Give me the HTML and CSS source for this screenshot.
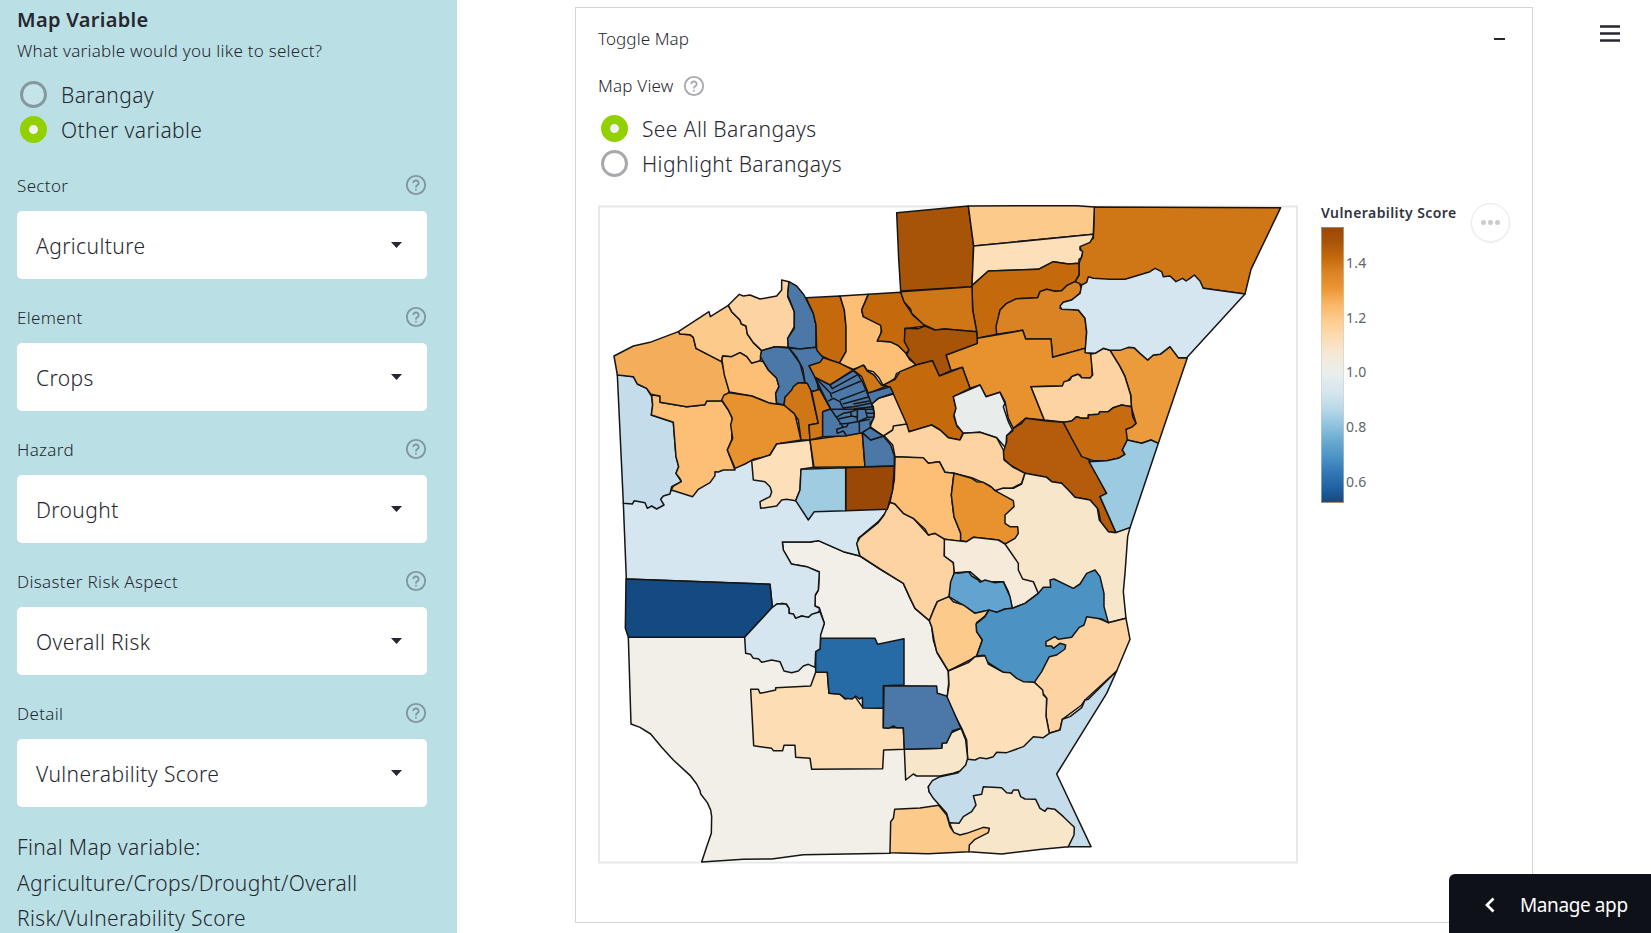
FILE: index.html
```html
<!DOCTYPE html>
<html lang="en">
<head>
<meta charset="utf-8">
<title>Map</title>
<link rel="stylesheet" href="styles.css">
</head>
<body>
<svg class="defs" width="0" height="0">
  <symbol id="help" viewBox="0 0 24 24"><circle cx="12" cy="12" r="10"/><path d="M9.1 9a3 3 0 0 1 5.8 1c0 2-2.9 2.4-2.9 4M12 17.2v.1"/></symbol>
</svg>
<div class="app">
  <aside class="sidebar">
    <h3 class="title">Map Variable</h3>
    <p class="question">What variable would you like to select?</p>
    <div class="radios">
      <label class="radio"><i class="dot"></i><span>Barangay</span></label>
      <label class="radio"><i class="dot on"></i><span>Other variable</span></label>
    </div>
    <div class="field"><div class="label"><span>Sector</span><svg class="help"><use href="#help"/></svg></div><div class="select"><span>Agriculture</span><i class="caret"></i></div></div>
    <div class="field"><div class="label"><span>Element</span><svg class="help"><use href="#help"/></svg></div><div class="select"><span>Crops</span><i class="caret"></i></div></div>
    <div class="field"><div class="label"><span>Hazard</span><svg class="help"><use href="#help"/></svg></div><div class="select"><span>Drought</span><i class="caret"></i></div></div>
    <div class="field"><div class="label"><span>Disaster Risk Aspect</span><svg class="help"><use href="#help"/></svg></div><div class="select"><span>Overall Risk</span><i class="caret"></i></div></div>
    <div class="field"><div class="label"><span>Detail</span><svg class="help"><use href="#help"/></svg></div><div class="select"><span>Vulnerability Score</span><i class="caret"></i></div></div>
    <p class="final">Final Map variable:<br>Agriculture/Crops/Drought/Overall<br>Risk/Vulnerability Score</p>
  </aside>
  <main class="main">
    <section class="card">
      <header class="card-head"><span>Toggle Map</span><i class="minus"></i></header>
      <div class="view-label"><span>Map View</span><svg class="help"><use href="#help"/></svg></div>
      <div class="radios view">
        <label class="radio"><i class="dot on"></i><span>See All Barangays</span></label>
        <label class="radio"><i class="dot"></i><span>Highlight Barangays</span></label>
      </div>
      <div class="chart">
        <svg class="map" viewBox="598 205 700 659" width="700" height="659">
          <rect class="frame" x="599" y="206.500" width="698" height="656"/>
          <!-- south-west -->
          <g transform="translate(600 500) scale(.33333)">
            <path fill="#f2efe8" d="M85 412L93 672L120 682L152 702L185 742L220 780L270 826L290 852L300 872L302 882L322 908L332 930L335 950L334 1000L320 1040L305 1086L430 1078L515 1077L610 1064L870 1060L900 1000L1040 930L987 875L985 860L1020 830L1060 700L1042 588L1046 550L1045 513L1012 460L1000 420L995 380L988 362L945 325L928 290L910 250L840 207L780 168L730 155L655 122L630 126L547 126L550 150L574 192L620 200L658 216L655 270L646 285L645 318L658 324L673 370L662 400L434 412Z"/>
          </g>
          <!-- north-west -->
          <g transform="translate(600 260) scale(.33333)">
            <path fill="#d5e6f0" d="M70 730L79 957L510 973L517 1042L545 1030L560 1033L567 1045L567 1060L580 1062L587 1075L605 1068L625 1073L658 1055L658 1044L645 1038L646 1005L655 990L658 936L620 920L574 912L550 870L547 846L630 846L655 842L730 875L780 888L772 855L775 835L835 785L865 748L600 700L460 590L345 600L220 690Z"/>
            <path fill="#c5ddea" d="M52 345L70 346L100 350L112 372L125 378L140 385L155 410L158 435L154 465L220 487L228 590L236 620L228 640L244 665L215 680L210 702L190 708L182 718L192 735L170 747L155 738L142 745L135 728L103 722L97 732L70 730Z"/>
            <path fill="#fcbf75" d="M155 405L180 408L180 427L260 440L315 434L320 423L365 422L385 450L397 475L395 540L382 570L405 630L370 630L355 636L345 635L345 647L330 668L295 688L278 710L214 690L220 678L244 665L240 656L228 640L236 620L228 590L220 487L154 465L158 435Z"/>
            <path fill="#f4ae5b" d="M42 288L100 258L150 247L235 215L240 222L270 224L280 232L288 265L365 305L388 395L365 422L320 423L315 434L260 440L180 427L180 408L153 403L140 385L112 372L100 350L52 345Z"/>
            <path fill="#fccb8c" d="M235 215L327 155L331 170L385 136L395 155L420 180L424 192L438 198L442 222L460 248L485 272L480 305L455 310L440 290L420 278L395 290L368 288L365 305L288 265L280 232L270 224L240 222Z"/>
            <path fill="#fcd3a1" d="M385 136L418 103L430 108L450 105L480 117L530 108L545 90L545 60L567 65L563 110L583 155L583 200L563 235L565 262L525 260L485 272L460 248L442 222L438 198L424 192L420 180L395 155Z"/>
            <path fill="#fcbf75" d="M368 288L395 290L420 278L440 290L455 310L480 302L490 305L505 330L530 355L537 380L527 400L530 432L510 430L455 408L388 396L373 345L366 300Z"/>
            <path fill="#e8922f" d="M365 420L372 405L388 398L455 408L510 430L552 435L585 462L603 540L530 552L510 585L490 592L460 598L435 612L405 625L382 570L398 535L392 495L397 475L385 450Z"/>
            <path fill="#4c78a8" d="M485 272L525 260L567 264L600 310L615 367L595 370L580 385L575 396L555 412L552 435L530 430L527 400L537 380L530 355L505 330L490 305L481 290Z"/>
            <path fill="#4c78a8" d="M567 65L590 78L612 105L640 160L648 195L648 262L600 267L565 262L563 235L583 205L583 155L563 105Z"/>
            <path fill="#4c78a8" d="M567 264L600 267L648 262L655 275L670 292L660 312L628 320L650 355L655 390L635 395L615 367L608 325L590 292Z"/>
            <path fill="#c56a0c" d="M618 113L720 108L733 150L738 200L738 275L718 310L690 300L665 288L650 270L648 195L640 160Z"/>
            <path fill="#fcbf75" d="M720 108L805 103L785 150L790 170L845 195L843 220L832 243L870 245L895 257L915 275L930 300L948 313L930 325L890 340L885 355L850 378L838 355L820 335L800 330L793 317L760 328L718 310L738 275L738 200L733 150Z"/>
            <path fill="#c56a0c" d="M805 103L902 97L915 130L932 155L940 167L975 195L970 199L915 206L915 230L927 270L918 280L895 257L870 245L832 243L845 215L842 196L790 170L785 150Z"/>
            <path fill="#fddfba" d="M455 602L510 585L530 552L630 540L640 622L603 628L600 690L587 722L560 718L545 720L530 738L482 745L480 725L510 710L515 695L510 680L495 665L460 660Z"/>
          </g>
          <!-- north-east -->
          <g transform="translate(880 195) scale(.33333)">
            <path fill="#cf7616" d="M643 36L1202 38L1113 223L1095 297L970 280L800 330L605 270L585 260L597 240L597 205L607 180L600 155L640 130Z"/>
            <path fill="#a85408" d="M50 53L265 33L281 153L276 275L62 288L56 190Z"/>
            <path fill="#fccb8c" d="M265 33L590 32L643 36L640 118L281 153Z"/>
            <path fill="#fddfba" d="M281 153L640 118L638 128L630 142L600 155L600 164L608 170L604 188L597 193L597 205L565 207L520 200L475 223L325 228L276 272Z"/>
            <path fill="#c56a0c" d="M276 272L325 228L475 223L520 200L565 207L597 205L597 240L585 260L560 272L545 287L525 289L500 283L480 290L473 308L410 311L380 325L360 345L350 418L292 430L290 410L278 345Z"/>
            <path fill="#d98324" d="M585 260L598 265L605 280L600 295L575 315L550 322L540 340L595 345L615 370L620 410L618 460L518 487L513 432L437 432L428 406L350 418L348 395L360 345L380 325L410 311L473 308L480 290L500 283L525 289L545 287L560 272Z"/>
            <path fill="#eb9b3c" d="M690 466L745 457L762 458L803 495L820 480L840 478L870 455L895 488L922 488L835 745L813 735L785 745L740 735L735 705L768 685L755 640L752 600L735 545L720 515Z"/>
            <path fill="#e8922f" d="M198 480L292 445L292 430L428 406L437 432L513 432L518 487L615 460L620 472L635 478L637 548L605 548L600 540L590 538L575 545L547 573L453 575L493 675L437 670L400 700L385 670L375 620L360 592L318 605L300 570L270 580L247 517L213 527Z"/>
            <path fill="#fcd3a1" d="M632 478L645 475L670 460L690 466L720 515L735 545L752 600L754 635L725 630L700 638L685 650L660 650L655 658L625 660L625 670L605 670L590 665L575 678L555 682L493 675L453 575L547 573L552 560L570 555L575 545L595 538L605 548L630 549L638 540Z"/>
            <path fill="#d5e6f0" d="M605 270L620 262L625 245L640 250L690 253L735 253L810 230L825 220L845 230L850 245L870 243L888 260L908 250L918 258L930 250L943 240L960 258L970 280L1095 297L920 488L895 488L870 455L840 478L820 480L803 495L780 475L762 458L745 457L720 466L690 466L670 460L645 475L615 473L620 410L615 370L595 345L545 343L540 333L550 322L575 315L600 295Z"/>
            <path fill="#cf7616" d="M62 290L276 275L278 345L290 410L195 402L165 405L130 388L95 355L92 343L72 320Z"/>
            <path fill="#a85408" d="M75 400L115 401L135 393L165 405L195 402L290 410L292 445L198 480L213 527L178 543L157 497L108 510L80 480L87 465L73 440Z"/>
            <path fill="#c56a0c" d="M10 570L45 553L60 530L108 510L157 497L178 543L247 517L270 580L220 605L228 640L222 665L232 695L250 710L240 735L205 728L180 705L155 690L87 710L40 600L30 578Z"/>
            <path fill="#e8ecea" d="M220 605L300 570L318 605L360 592L375 625L370 635L385 680L397 705L380 722L378 760L350 728L300 712L250 715L230 690L222 660L228 640Z"/>
            <path fill="#b55c0c" d="M400 700L425 685L437 670L500 678L550 682L605 780L630 797L680 895L660 905L708 1013L685 1010L662 980L655 945L630 915L585 907L545 865L515 860L500 847L435 835L390 810L370 790L370 770L380 740L380 722L398 708Z"/>
            <path fill="#c66b10" d="M550 682L575 678L590 665L605 670L625 670L625 660L655 658L660 650L685 650L700 638L725 630L754 635L758 665L768 685L755 697L738 703L742 735L727 765L735 778L715 790L680 797L640 797L605 785L575 730Z"/>
            <path fill="#9ccae1" d="M627 800L680 797L715 790L735 778L727 765L742 735L785 745L813 735L835 745L750 998L708 1013L660 905L680 895Z"/>
            <path fill="#fcd3a1" d="M80 687L87 710L155 690L180 705L205 728L240 735L250 715L300 712L350 728L370 765L372 795L400 817L435 835L425 865L395 880L345 887L330 873L315 865L280 850L222 835L195 832L178 800L145 805L130 790L45 785L38 750L10 720L38 700L40 690Z"/>
          </g>
          <!-- east and centre -->
          <g transform="translate(880 400) scale(.33333)">
            <path fill="#f8e6cb" d="M435 220L500 232L515 245L545 250L570 275L585 292L630 300L652 325L658 360L685 395L708 398L750 383L743 410L735 520L730 575L738 655L685 668L475 640L370 430L345 272L370 264L400 265L425 252Z"/>
            <path fill="#fcd3a1" d="M30 307L45 312L70 340L100 355L145 405L165 400L195 418L193 468L220 488L223 515L207 590L172 605L160 632L148 662L105 625L88 590L70 550L0 507L-60 468L-70 430L-60 412L-5 368L12 345Z"/>
            <path fill="#fcbf75" d="M45 170L130 173L145 190L178 185L195 217L222 220L214 285L222 350L242 400L242 425L195 418L165 400L145 405L135 387L118 372L100 355L70 340L45 312L30 307L43 240Z"/>
            <path fill="#e8922f" d="M222 220L275 235L290 245L310 247L335 262L345 272L400 302L402 320L375 345L375 370L390 380L413 380L415 400L405 415L375 432L355 420L280 412L260 425L242 422L242 400L222 350L214 285Z"/>
            <path fill="#f6ebda" d="M193 418L260 425L280 412L355 420L375 432L415 490L415 510L428 537L460 545L475 580L435 610L397 625L385 575L370 545L305 545L270 515L223 518L220 488L193 468Z"/>
            <path fill="#62a4cf" d="M223 518L235 520L265 515L275 528L295 540L300 547L315 540L345 548L370 545L390 590L397 625L375 627L350 637L320 632L285 640L260 622L240 610L207 590L212 545Z"/>
            <path fill="#fccb8c" d="M172 605L207 590L220 605L250 615L285 640L327 630L315 648L290 668L290 695L307 720L290 768L270 780L205 813L170 755L162 720L155 680L148 662L160 632Z"/>
            <path fill="#fcd3a1" d="M738 655L750 718L710 813L615 900L605 915L547 958L540 990L508 1000L498 950L500 895L463 847L440 700L620 640L685 668Z"/>
            <path fill="#4c93c3" d="M327 630L350 637L375 627L397 625L435 610L475 580L490 562L512 562L510 540L522 537L580 565L600 552L620 520L645 510L660 530L672 580L672 620L685 668L665 657L620 650L612 675L598 682L575 712L535 718L525 710L498 725L498 738L515 738L520 745L540 730L557 735L555 747L530 765L508 770L485 815L463 847L430 848L410 838L370 817L335 795L320 785L313 766L290 768L307 720L290 695L288 672L315 650Z"/>
          </g>
          <!-- south-east -->
          <g transform="translate(850 640) scale(.33333)">
            <path fill="#c5ddea" d="M800 93L770 160L620 402L723 620L655 620L500 600L298 548L290 520L250 475L237 455L235 440L247 422L270 410L325 398L350 360L410 300L598 280L630 270L637 238L660 230L695 203L705 180L715 178Z"/>
            <path fill="#fddfba" d="M295 93L355 68L375 50L405 47L415 72L460 97L480 98L500 115L520 125L553 127L578 150L580 165L590 175L588 228L598 280L580 293L550 290L520 320L470 338L440 337L430 350L410 356L390 353L375 360L353 358L350 300L335 265L290 180L297 135Z"/>
            <path fill="#f8e6cb" d="M298 548L327 550L340 530L365 515L378 495L370 467L395 463L400 440L455 443L470 458L485 460L490 450L505 450L512 470L525 477L557 478L570 505L585 514L592 505L615 508L640 530L673 562L672 585L655 620L575 628L455 642L357 635L320 600Z"/>
            <path fill="#fccb8c" d="M120 638L122 545L130 535L134 508L210 504L266 496L290 525L300 560L312 578L330 585L350 580L400 562L418 565L415 578L375 598L358 615L357 635L235 641Z"/>
            <path fill="#f8e6cb" d="M163 328L275 325L277 308L290 308L300 280L333 265L347 300L353 355L347 375L330 393L310 400L270 408L200 408L190 402L167 420Z"/>
          </g>
          <g transform="translate(600 500) scale(.33333)">
            <path fill="#fdddb3" d="M452 568L475 568L480 580L527 570L527 563L632 558L647 517L682 517L687 580L720 582L735 597L765 590L788 622L850 625L850 683L910 683L913 748L851 750L848 806L635 808L630 775L587 772L585 736L552 736L548 752L520 752L515 745L461 737Z"/>
            <path fill="#266aa6" d="M662 415L825 415L833 433L912 416L912 555L850 557L850 625L788 624L787 592L778 597L767 588L757 597L735 595L720 583L687 580L682 517L647 517L647 452L660 447Z"/>
            <path fill="#134a82" d="M78 237L510 253L517 322L434 412L85 412L76 385Z"/>
            <path fill="#d5e6f0" d="M434 412L517 322L532 311L558 312L567 325L567 340L580 342L587 355L605 348L625 352L635 343L660 335L673 370L662 405L660 447L647 455L645 502L625 493L610 498L595 513L575 518L552 513L540 485L515 480L485 487L475 476L460 475L452 463L437 460Z"/>
            <path fill="#4c78a8" d="M852 557L1010 558L1012 580L1040 588L1083 685L1058 692L1040 728L1026 730L1025 745L913 748L910 683L890 683L880 678L865 685L850 683Z"/>
          </g>
          <!-- urban core -->
          <g transform="translate(780 330) scale(.33333)">
            <path fill="#cf7616" d="M12 225L15 202L35 180L40 170L55 158L82 160L92 180L115 280L87 285L90 330L63 330L55 270L42 250Z"/>
            <path fill="#cf7616" d="M95 185L120 178L152 237L128 245L128 320L90 330L87 285L115 280Z"/>
            <path fill="#cf7616" d="M87 107L120 97L130 83L180 100L220 120L150 165L105 142Z"/>
            <path fill="#cf7616" d="M220 120L250 105L262 123L282 135L305 166L320 168L265 190L245 140Z"/>
            <path fill="#e8922f" d="M90 330L195 315L247 308L255 410L102 412Z"/>
            <path fill="#4c78a8" d="M247 308L272 330L310 318L332 345L343 378L343 408L255 410Z"/>
            <path fill="#994807" d="M197 413L343 408L338 480L322 538L197 542Z"/>
            <path fill="#a0cce1" d="M63 418L197 413L197 542L103 545L85 570L47 512L60 480Z"/>
            <path fill="#fcd3a1" d="M340 192L380 282L340 288L338 300L310 318L270 290L283 258L280 230L275 222L295 205Z"/>
            <path fill="#4c78a8" d="M105 142L150 165L220 122L235 135L247 155L262 190L272 215L283 250L280 268L270 278L272 293L247 308L195 318L128 320L128 245L152 237L120 180Z"/>
            <path fill="#4c78a8" d="M262 190L330 170L340 190L295 205L275 222Z"/>
            <path fill="#4c78a8" d="M247 308L270 293L310 318L272 330Z"/>
            <path fill="none" d="M105 142L152 190L155 203M105 142L152 237M150 165L158 178M158 175L235 133M155 190L243 153M180 210L255 182M145 213L160 205L180 215L188 233M188 222L268 200M188 233L222 230M220 222L268 213M220 230L272 220M222 236L278 230M152 237L222 238L280 238M168 262L190 250L215 245L232 238M172 268L215 258L232 262M213 243V260M232 238V275M255 235L262 262L235 275M258 250H282M262 262H280M178 282L205 280L232 275L270 268M152 237L190 292L170 298L172 310L190 303L200 318M205 280L200 290L185 292M238 275V308"/>
          </g>
        </svg>
        <div class="legend">
          <div class="legend-title">Vulnerability Score</div>
          <div class="scale">
            <div class="ramp"></div>
            <div class="ticks"><span>1.4</span><span>1.2</span><span>1.0</span><span>0.8</span><span>0.6</span></div>
          </div>
        </div>
        <div class="more"><i></i><i></i><i></i></div>
      </div>
    </section>
  </main>
  <svg class="burger" viewBox="0 0 20 18"><path d="M0 1.500H20M0 8.500H20M0 15.500H20"/></svg>
  <button class="manage"><svg width="10" height="16" viewBox="0 0 10 16"><path d="M8.500 1.500L2 8L8.500 14.500"/></svg><span>Manage app</span></button>
</div>
</body>
</html>
```
FILE: styles.css
```css
* { box-sizing: border-box; }
body { margin: 0; background: #fff; color: #262730; font-family: "Noto Sans", sans-serif; font-weight: 300; }
p, h3 { margin: 0; }
i { display: block; }
.defs { position: absolute; }
.app { position: relative; display: flex; width: 1651px; height: 933px; overflow: hidden; }
.sidebar { flex: none; width: 457px; height: 933px; padding: 4px 30px 0 17px; background: #bae0e5; overflow: hidden; }
.title { height: 32px; font-size: 20px; font-weight: 600; line-height: 32px; letter-spacing: .3px; }
.question { height: 30px; font-size: 17px; line-height: 30px; letter-spacing: .25px; white-space: nowrap; }
.radios { padding: 10.500px 0 0 3px; }
.radio { display: flex; align-items: center; gap: 14px; height: 35.300px; font-size: 21px; letter-spacing: .4px; white-space: nowrap; }
.radio span { padding-top: 2px; }
.dot { flex: none; width: 27px; height: 27px; border-radius: 50%; border: 3px solid rgba(38,39,48,.4); background: rgba(255,255,255,.15); }
.dot.on { border: 9px solid #92d000; background: #f0f2f6; }
.field { height: 132px; }
.radios + .field { margin-top: 18px; }
.label { display: flex; align-items: center; justify-content: space-between; height: 40px; font-size: 17px; letter-spacing: .35px; }
.help { width: 22px; height: 22px; fill: none; stroke: #262730; stroke-opacity: .4; stroke-width: 2; stroke-linecap: round; stroke-linejoin: round; }
.select { display: flex; align-items: center; justify-content: space-between; height: 68px; margin-top: 6px; padding: 0 25px 0 19px; background: #fff; border-radius: 5px; font-size: 21px; letter-spacing: .4px; }
.select span { padding-top: 2px; }
.caret { width: 11px; height: 6px; background: #262730; clip-path: polygon(0 0, 100% 0, 50% 100%); }
.final { margin-top: 5px; font-size: 21px; line-height: 35.600px; letter-spacing: .35px; white-space: nowrap; }
.main { flex: none; padding: 7px 0 0 118px; }
.card { width: 958px; height: 916px; padding: 0 22px; border: 1px solid #d3d4d6; }
.card-head { display: flex; align-items: center; justify-content: space-between; height: 62px; padding-right: 5px; font-size: 17px; letter-spacing: .1px; }
.card-head span, .view-label span { padding-bottom: 2px; }
.minus { width: 11px; height: 2px; background: #262730; }
.view-label { display: flex; align-items: center; gap: 9px; height: 32px; font-size: 17px; letter-spacing: .2px; }
.radios.view { padding-top: 8.500px; }
.chart { display: flex; margin-top: 24px; }
.map { flex: none; overflow: visible; }
.map path { stroke: #151515; stroke-width: 4.500; stroke-linejoin: round; }
.frame { fill: none; stroke: #e8e8e8; stroke-width: 2; }
.legend { flex: none; width: 143px; margin-left: 23px; }
.legend-title { height: 22px; font-size: 14px; font-weight: 600; line-height: 16px; letter-spacing: .42px; white-space: nowrap; color: #31333f; }
.scale { display: flex; gap: 2px; }
.ramp { width: 23px; height: 276px; border: 1px solid #ccc8; background: linear-gradient(#994807, #a85408 5%, #c56a0c 11%, #d98324 16%, #eb9535 22%, #fab767 28%, #fdc98a 33%, #fcdaaf 39%, #f6e8d5 46%, #e9eeec 53%, #d5e5ef 60%, #b9d8e9 66%, #8fc3de 72%, #67a9d0 78%, #4992c5 84%, #3379b5 89%, #1f61a1 95%, #134a82); }
.ticks { display: flex; flex-direction: column; gap: 34.700px; padding-top: 26px; font-size: 14px; font-weight: 400; line-height: 20px; letter-spacing: .2px; color: #62636b; }
.more { display: flex; align-items: center; justify-content: center; gap: 2px; width: 39px; height: 39px; margin: -2px 0 0 7px; border: 1px solid #e8e8e8; border-radius: 50%; box-shadow: 0 1px 2px #0001; }
.more i { width: 5px; height: 5px; border-radius: 50%; background: #ccc; }
.burger { flex: none; width: 20px; height: 18px; margin: 25px 0 0 67px; fill: none; stroke: #262730; stroke-width: 2.400; }
.manage { position: absolute; right: 0; bottom: 0; display: flex; align-items: center; gap: 25px; width: 202px; height: 59px; padding: 3px 0 0 36px; border: 0; border-radius: 6px 0 0 0; background: #0e1117; color: #fff; font: 400 19px "Noto Sans", sans-serif; letter-spacing: -.4px; white-space: nowrap; }
.manage svg { flex: none; fill: none; stroke: #fff; stroke-width: 2.700; }
.manage span { padding-bottom: 1px; }
```
